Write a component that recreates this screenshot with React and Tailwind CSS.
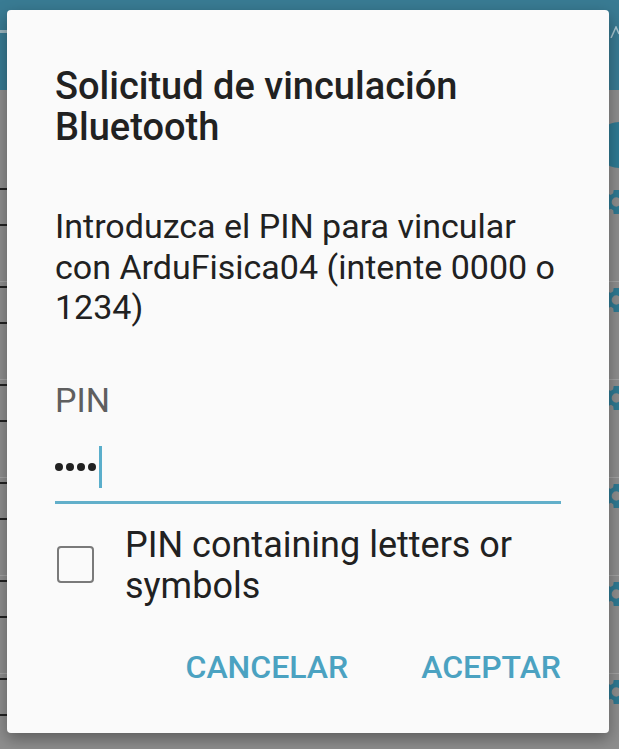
import React from "react";

const font = { fontFamily: "Roboto, 'Noto Sans', sans-serif" };

function Gear() {
  return (
    <svg viewBox="0 0 24 24" className="w-[32px] h-[32px]" fill="#2f7a93">
      <path d="M19.4 13a7.5 7.5 0 0 0 0-2l2.1-1.6-2-3.5-2.5 1a7.3 7.3 0 0 0-1.7-1L15 3h-4l-.4 2.7a7.3 7.3 0 0 0-1.7 1l-2.5-1-2 3.5L6.6 11a7.5 7.5 0 0 0 0 2l-2.1 1.6 2 3.5 2.5-1c.5.4 1.1.7 1.7 1L11 21h4l.4-2.7c.6-.3 1.2-.6 1.7-1l2.5 1 2-3.5zM13 15.5a3.5 3.5 0 1 1 0-7 3.5 3.5 0 0 1 0 7z" />
    </svg>
  );
}

const rows = [1, 2, 3, 4, 5, 6];

export default function App() {
  return (
    <div className="relative w-[619px] h-[749px] overflow-hidden bg-[#8e8e8e]" style={font}>
      {/* dimmed app behind the dialog */}
      <div className="h-[90px] bg-[#397b93] flex items-start justify-between pt-[30px]">
        <div className="w-[8px] h-[3px] bg-[#9fb8c0]" />
        <svg viewBox="0 0 10 12" className="w-[10px] h-[12px] mt-[-4px]">
          <path d="M2 12 L7 1 L10 8" stroke="#a9c7d1" strokeWidth="1.5" fill="none" />
        </svg>
      </div>
      <div className="flex justify-end pt-[32px]">
        <div className="w-[46px] h-[46px] rounded-full bg-[#2f7a93] mr-[-23px]" />
      </div>
      <div className="flex flex-col mt-[16px]">
        {rows.map((r) => (
          <div key={r} className="h-[98px] flex justify-between items-start border-b border-[#a3a3a3]">
            <div className="flex flex-col gap-[34px] pt-[4px]">
              <div className="w-[7px] h-[2px] bg-[#222]" />
              <div className="w-[7px] h-[2px] bg-[#222]" />
            </div>
            <div className="mr-[-12px] mt-[2px]">
              <Gear />
            </div>
          </div>
        ))}
      </div>

      {/* dialog */}
      <div className="absolute left-[7px] top-[10px] w-[602px] h-[723px] rounded-[4px] bg-[#fafafa] shadow-[0_6px_16px_rgba(0,0,0,0.35)] px-[48px] pt-[56px]">
        <h1 className="text-[38px] leading-[41px] font-medium text-[#212121]">
          Solicitud de vinculación
          <br />
          Bluetooth
        </h1>

        <p className="mt-[58px] text-[34px] leading-[40.5px] text-[#212121]">
          Introduzca el PIN para vincular con ArduFisica04 (intente 0000 o 1234)
        </p>

        <div className="mt-[52px] text-[34px] leading-[40px] text-[#5f5f5f]">PIN</div>

        <div className="mt-[26px] flex items-center h-[42px]">
          <div className="flex gap-[3px]">
            <span className="w-[8px] h-[8px] rounded-full bg-[#212121]" />
            <span className="w-[8px] h-[8px] rounded-full bg-[#212121]" />
            <span className="w-[8px] h-[8px] rounded-full bg-[#212121]" />
            <span className="w-[8px] h-[8px] rounded-full bg-[#212121]" />
          </div>
          <span className="ml-[3px] w-[3px] h-[42px] bg-[#5aaecb]" />
        </div>
        <div className="mt-[13px] h-[3px] bg-[#62afca]" />

        <div className="mt-[19px] flex items-center">
          <div className="ml-[2px] w-[37px] h-[37px] rounded-[4px] border-2 border-[#7a7a7a] shrink-0" />
          <div className="ml-[31px] pt-[2px] text-[36px] leading-[41px] text-[#212121]">
            PIN containing letters or symbols
          </div>
        </div>

        <div className="mt-[36px] flex justify-end gap-[73px] text-[32px] font-medium text-[#4ba2c1]">
          <span>CANCELAR</span>
          <span>ACEPTAR</span>
        </div>
      </div>
    </div>
  );
}
